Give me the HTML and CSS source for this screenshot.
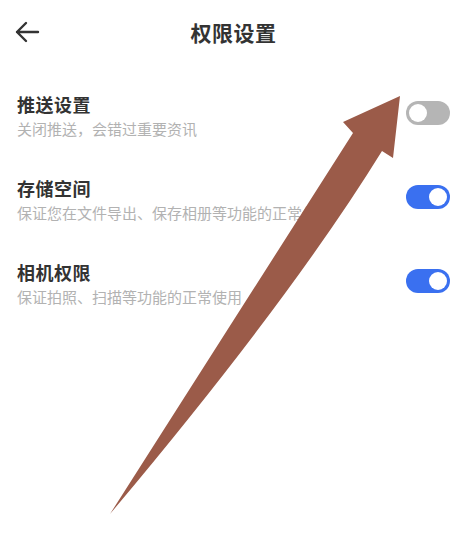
FILE: index.html
```html
<!DOCTYPE html>
<html lang="zh">
<head>
<meta charset="utf-8">
<title>权限设置</title>
<link rel="stylesheet" href="styles.css">
</head>
<body>
<div class="page">
  <header class="header">
    <div class="back">
      <svg width="26" height="24" viewBox="0 0 26 24"><path d="M24 12H3M12 3L3 12l9 9" fill="none" stroke="#333" stroke-width="2.4" stroke-linecap="round" stroke-linejoin="round"/></svg>
    </div>
    <h1 class="title">权限设置</h1>
    <div class="spacer"></div>
  </header>
  <div class="list">
    <div class="row">
      <div class="text">
        <div class="name">推送设置</div>
        <div class="desc">关闭推送，会错过重要资讯</div>
      </div>
      <div class="toggle off"><span class="knob"></span></div>
    </div>
    <div class="row">
      <div class="text">
        <div class="name">存储空间</div>
        <div class="desc">保证您在文件导出、保存相册等功能的正常使用</div>
      </div>
      <div class="toggle on"><span class="knob"></span></div>
    </div>
    <div class="row">
      <div class="text">
        <div class="name">相机权限</div>
        <div class="desc">保证拍照、扫描等功能的正常使用</div>
      </div>
      <div class="toggle on"><span class="knob"></span></div>
    </div>
  </div>
  <svg class="annot" width="475" height="545" viewBox="0 0 475 545">
    <path d="M400 96 L393 158 L382 151 Q290 300 110 514 L353 133 L343 122 Z" fill="#9b5b49"/>
  </svg>
</div>
</body>
</html>
```
FILE: styles.css
```css
html, body {
  margin: 0;
  padding: 0;
  background: #fff;
}
body {
  font-family: "Noto Sans CJK SC", "Noto Sans", sans-serif;
  width: 475px;
  height: 545px;
  overflow: hidden;
}
.page {
  position: relative;
  width: 475px;
  height: 545px;
}
.header {
  height: 64px;
  display: grid;
  grid-template-columns: 60px 1fr 60px;
  align-items: center;
}
.back {
  padding-left: 14px;
  display: flex;
  align-items: center;
}
.title {
  margin: 0;
  padding-right: 8px;
  text-align: center;
  font-size: 21px;
  font-weight: 700;
  color: #333;
  letter-spacing: 0.5px;
}
.list {
  padding-top: 7px;
}
.row {
  height: 84px;
  display: flex;
  align-items: center;
  justify-content: space-between;
  padding: 0 25px 0 17px;
}
.text {
  display: flex;
  flex-direction: column;
  padding-top: 4px;
}
.name {
  font-size: 18px;
  line-height: 24px;
  font-weight: 700;
  color: #333;
  letter-spacing: 0.5px;
}
.desc {
  margin-top: 3px;
  font-size: 15px;
  line-height: 20px;
  color: #b2b2b2;
}
.toggle {
  width: 44px;
  height: 24px;
  border-radius: 12px;
  display: flex;
  align-items: center;
  padding: 0 3px;
  box-sizing: border-box;
}
.toggle.off {
  background: #b5b5b5;
  justify-content: flex-start;
}
.toggle.on {
  background: #3a70f0;
  justify-content: flex-end;
}
.knob {
  width: 18px;
  height: 18px;
  border-radius: 50%;
  background: #fff;
}
.annot {
  position: absolute;
  left: 0;
  top: 0;
  pointer-events: none;
}
```
